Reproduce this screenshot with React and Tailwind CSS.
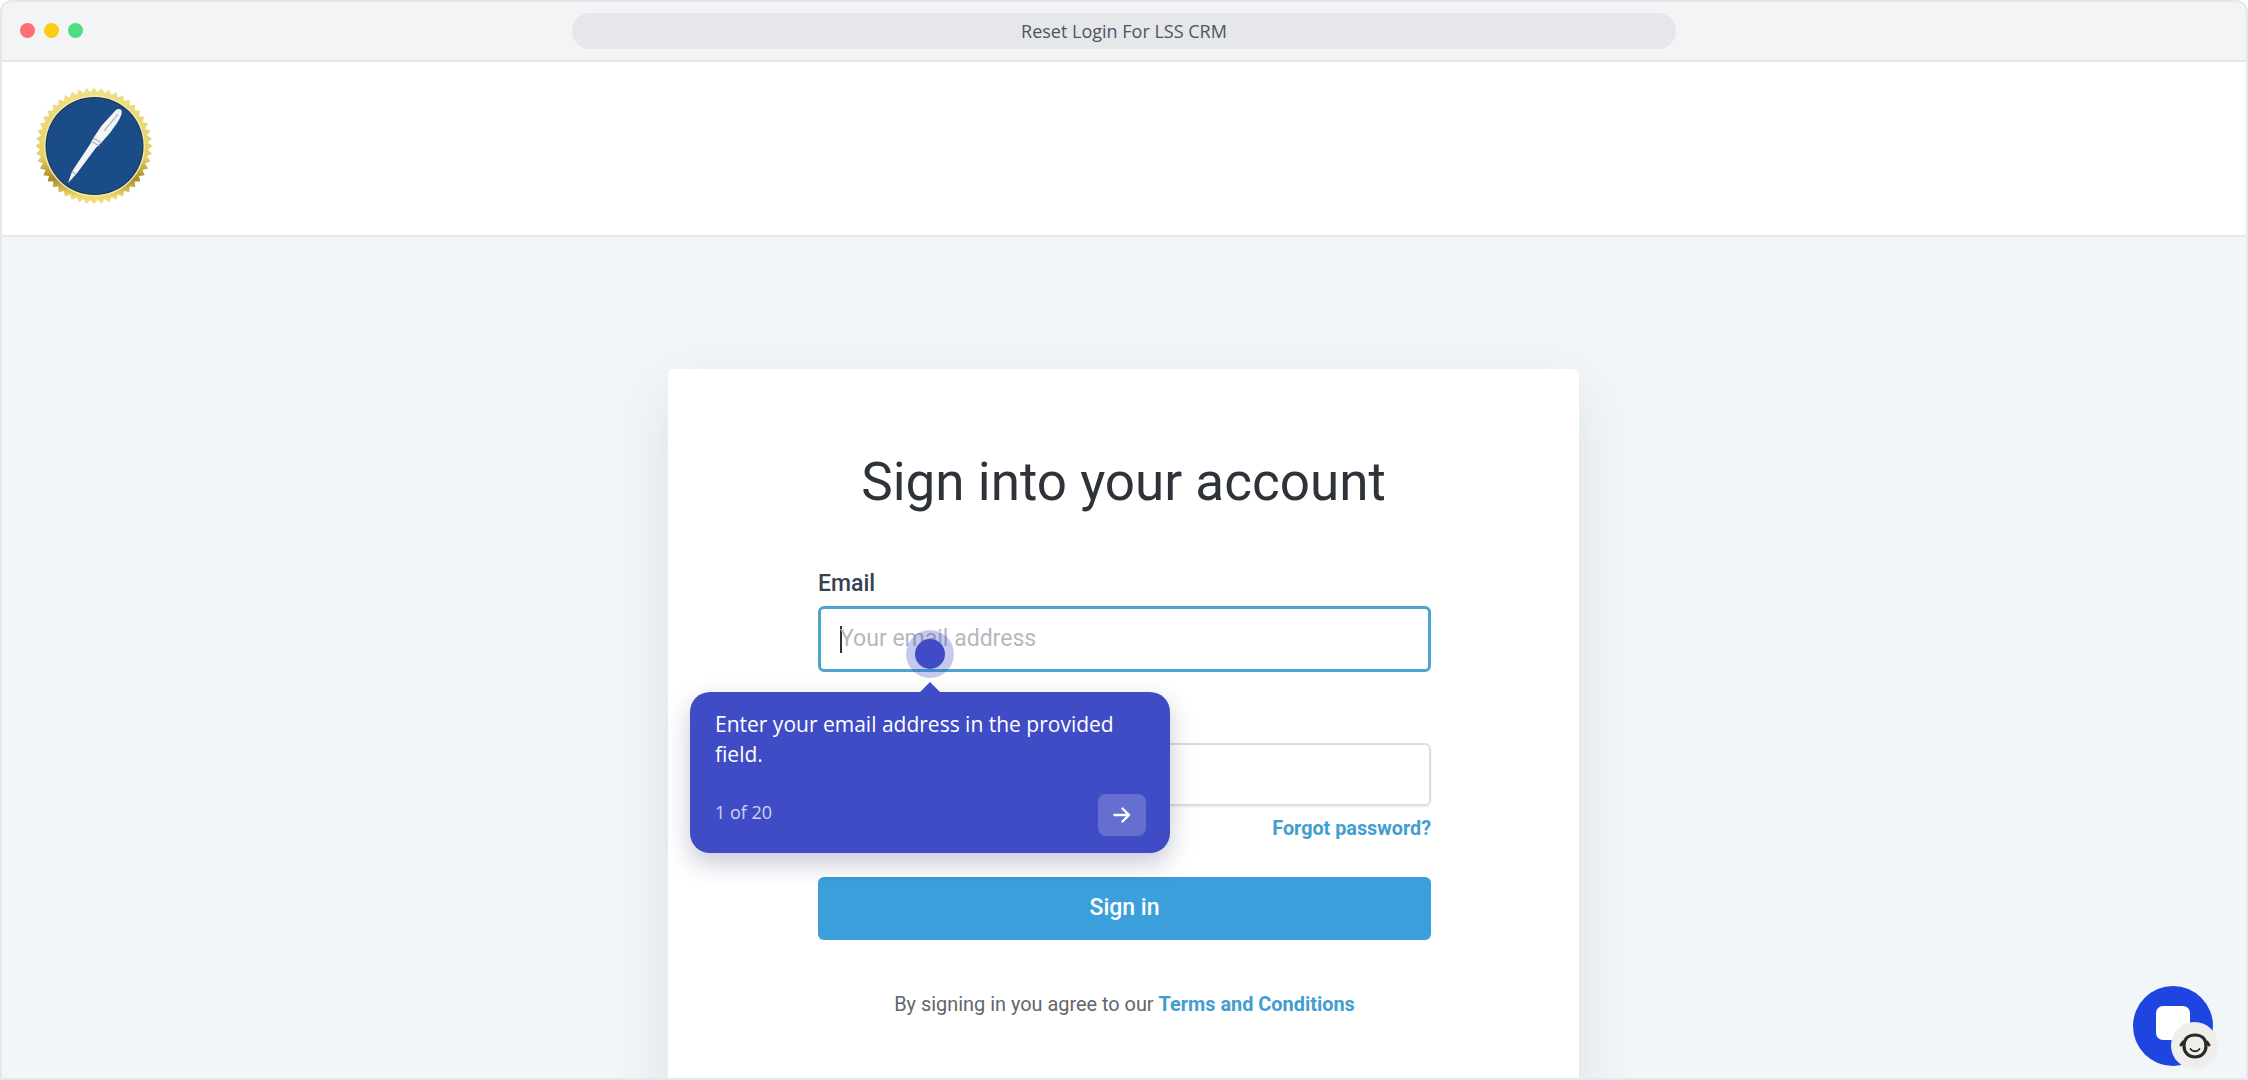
import React from "react";

// Gold seal outline, 48 teeth around the centre
const sealPoints = Array.from({ length: 96 }, (_, i) => {
  const r = i % 2 === 0 ? 58.5 : 54;
  const a = (i * Math.PI) / 48;
  return `${(58 + r * Math.cos(a)).toFixed(2)},${(59 + r * Math.sin(a)).toFixed(2)}`;
}).join(" ");

const Logo = () => (
  <svg width="116" height="118" viewBox="0 0 116 118">
    <defs>
      <linearGradient id="gold" x1="0" y1="0" x2="0" y2="1">
        <stop offset="0" stopColor="#efe08a" />
        <stop offset="0.6" stopColor="#e4d164" />
        <stop offset="0.78" stopColor="#a88a2e" />
        <stop offset="0.93" stopColor="#ecd970" />
        <stop offset="1" stopColor="#efe08a" />
      </linearGradient>
    </defs>
    <polygon points={sealPoints} fill="url(#gold)" />
    <circle cx="58.5" cy="59" r="50.5" fill="#f4e9a0" />
    <circle cx="58.5" cy="59" r="49" fill="#1b3358" />
    <circle cx="58.5" cy="59" r="48" fill="#1a4c87" />
    {/* pen */}
    <path d="M32 96 L36 84.5 L54.2 57 L58 50 L65.5 38.8 L79 24 C82 20.5 87 22 85.5 27 C84 33 78 40 74.5 45.2 L66 55 L59.8 61 L40 87.5 Z" fill="#f4f4f6" />
    <path d="M68 44 L82 27" stroke="#b9bcc4" strokeWidth="1.3" fill="none" />
    <path d="M57 51 L66 56 M55 54 L63.5 59" stroke="#a9adb6" strokeWidth="1.1" />
    <path d="M36 84.5 L40 87.5" stroke="#a9adb6" strokeWidth="1.1" />
  </svg>
);

const ChatWidget = () => (
  <div className="absolute left-[2133px] top-[986px] w-[80px] h-[80px] rounded-full bg-[#1f45e0]">
    <div className="absolute left-[23px] top-[20px] w-[34px] h-[34px] rounded-[7px] bg-white" />
    <div className="absolute left-[38px] top-[36px] w-[47px] h-[47px] rounded-full bg-[#efeeea] flex items-center justify-center">
      <svg width="32" height="28" viewBox="0 0 32 28" fill="none">
        <path d="M5 14 C5 6 10 3 16 3 C22 3 27 6 27 14 C27 21 22 25 16 25 C10 25 5 21 5 14 Z" stroke="#2a2a28" strokeWidth="3.2" />
        <path d="M2 13 L4 10 M30 13 L28 10" stroke="#2a2a28" strokeWidth="3" strokeLinecap="round" />
        <path d="M11.5 17 C13.5 20 18.5 20 20.5 17" stroke="#2a2a28" strokeWidth="1.8" strokeLinecap="round" />
      </svg>
    </div>
  </div>
);

const App = () => {
  return (
    <div className="relative w-[2248px] h-[1080px] overflow-hidden bg-white">
      <div className="flex flex-col h-[1080px] border-2 border-[#e5e7eb] rounded-t-[12px] overflow-hidden font-['Roboto',sans-serif]">
        {/* Browser bar */}
        <div className="relative flex items-center justify-center h-[60px] shrink-0 bg-[#f3f4f6] border-b-2 border-[#e5e7eb]">
          <div className="absolute left-[18px] top-[21px] flex gap-[9px]">
            <div className="w-[15px] h-[15px] rounded-full bg-[#ff6f71]" />
            <div className="w-[15px] h-[15px] rounded-full bg-[#fdcb14]" />
            <div className="w-[15px] h-[15px] rounded-full bg-[#4ade80]" />
          </div>
          <div className="w-[1104px] h-[36px] rounded-full bg-[#e5e7eb] flex items-center justify-center font-['Open_Sans',sans-serif] text-[18px] text-[#4b5563]">
            Reset Login For LSS CRM
          </div>
        </div>

        {/* Site header */}
        <div className="h-[175px] shrink-0 bg-white border-b-2 border-[#e5e7eb] pl-[34px] pt-[25px]">
          <Logo />
        </div>

        {/* Page body */}
        <div className="flex-1 bg-[#f1f6f9] flex justify-center pt-[132px] overflow-hidden">
          <div className="w-[911px] h-[800px] mr-[1px] shrink-0 bg-white rounded-[6px] shadow-[0_20px_60px_rgba(60,80,100,0.12)] flex flex-col items-center">
            <h1 className="mt-[83px] text-[53px] leading-[60px] text-[#2d3339] font-normal">Sign into your account</h1>
            <div className="w-[613px] ml-[2px] mt-[57px]">
              <label className="block text-[23px] leading-[30px] font-medium text-[#374151]">Email</label>
              <div className="mt-[7px] h-[66px] rounded-[6px] border-[3px] border-[#4fa3cf] flex items-center pl-[19px]">
                <div className="w-[2px] h-[27px] bg-[#2d3339]" />
                <span className="-ml-[2px] text-[23px] text-[#b5b8bd]">Your email address</span>
              </div>
              <div className="mt-[71px] h-[63px] rounded-[6px] border-2 border-[#dcdddf] shadow-[0_1px_2px_rgba(0,0,0,0.08)]" />
              <div className="mt-[9px] text-right text-[19.8px] leading-[28px] font-bold text-[#429dd0]">Forgot password?</div>
              <button className="mt-[34px] w-full h-[63px] rounded-[6px] bg-[#3a9fdb] text-white text-[23px] font-medium">Sign in</button>
              <p className="mt-[51px] text-center text-[19.9px] leading-[28px] text-[#5f666e]">
                By signing in you agree to our <span className="font-bold text-[#429dd0]">Terms and Conditions</span>
              </p>
            </div>
          </div>
        </div>
      </div>

      {/* Guide hotspot */}
      <div className="absolute left-[906px] top-[630px] w-[48px] h-[48px] rounded-full bg-[#3f4cc5]/30 flex items-center justify-center">
        <div className="w-[30px] h-[30px] rounded-full bg-[#3f4cc5]" />
      </div>

      {/* Guide tooltip */}
      <div className="absolute left-[690px] top-[692px] w-[480px] h-[161px] rounded-[20px] bg-[#3f4cc5] shadow-[0_10px_25px_rgba(30,40,90,0.25)] px-[25px] pt-[17px] font-['Open_Sans',sans-serif] text-white">
        <div className="absolute left-[233px] -top-[7px] w-[14px] h-[14px] rotate-45 bg-[#3f4cc5]" />
        <p className="relative text-[21px] leading-[30px]">Enter your email address in the provided field.</p>
        <div className="absolute left-[25px] top-[108px] text-[18px] leading-[24px] text-white/75">1 of 20</div>
        <div className="absolute left-[408px] top-[102px] w-[48px] h-[42px] rounded-[8px] bg-white/20 flex items-center justify-center">
          <svg width="20" height="20" viewBox="0 0 20 20" fill="none" stroke="#fff" strokeWidth="2.4" strokeLinecap="round" strokeLinejoin="round">
            <path d="M2.5 10 H17 M10.5 3.5 L17 10 L10.5 16.5" />
          </svg>
        </div>
      </div>

      <ChatWidget />
    </div>
  );
};

export default App;
